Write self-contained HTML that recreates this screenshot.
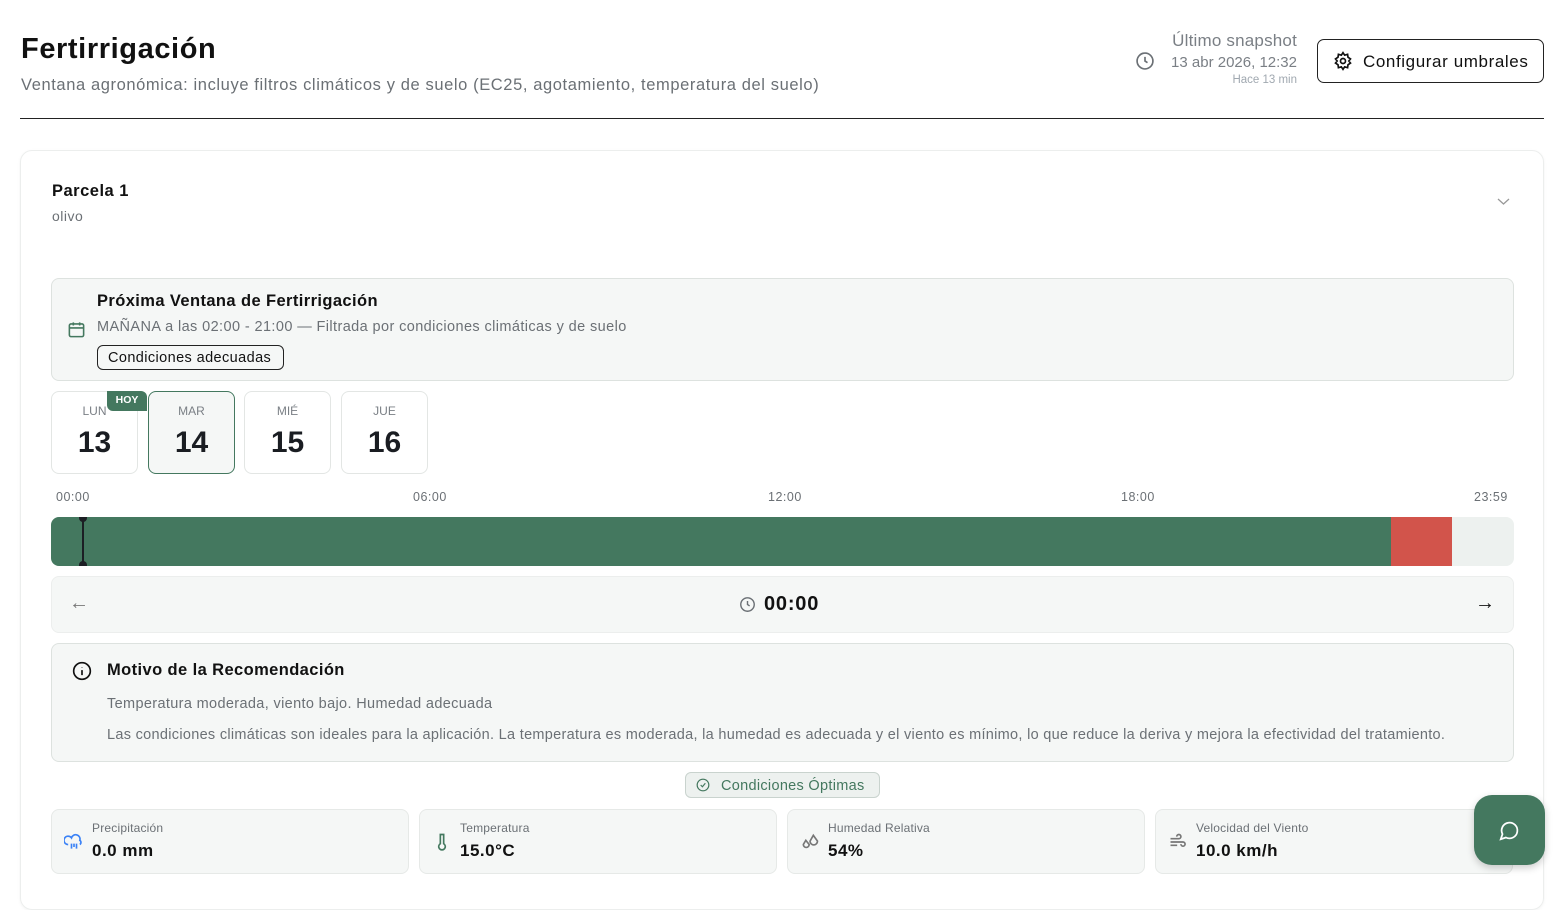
<!DOCTYPE html>
<html><head><meta charset="utf-8"><style>
*{box-sizing:border-box;margin:0;padding:0}
body{width:1564px;height:889px;overflow:hidden;background:#fff;font-family:"Liberation Sans",sans-serif;color:#111;position:relative;letter-spacing:.5px}
.abs{position:absolute}
.muted{color:#6b7075}
.box{position:absolute;background:#f5f7f6;border:1px solid #dde2df;border-radius:8px}
.day{position:absolute;top:391px;width:87px;height:83px;border:1px solid #e3e6e4;border-radius:8px;background:#fff;text-align:center;letter-spacing:0}
.day .d{font-size:12px;color:#7a7f85;margin-top:12px}
.day .n{font-size:30px;font-weight:bold;margin-top:8px;color:#1a1d22}
.stat{position:absolute;top:809px;height:65px;width:358px;background:#f5f7f6;border:1px solid #e6e9e7;border-radius:8px}
.stat .l{position:absolute;left:40px;top:11px;font-size:12px;color:#6b7075;letter-spacing:.2px}
.stat .v{position:absolute;left:40px;top:31px;font-size:17px;font-weight:bold}
.stat svg{position:absolute;left:12px;top:22px}
</style></head><body>
<div class="abs" style="left:21px;top:33px;font-size:29px;font-weight:bold;letter-spacing:.6px">Fertirrigación</div>
<div class="abs muted" style="left:21px;top:76px;font-size:16.5px;letter-spacing:.6px">Ventana agronómica: incluye filtros climáticos y de suelo (EC25, agotamiento, temperatura del suelo)</div>
<svg class="abs" style="left:1135px;top:51px" width="20" height="20" viewBox="0 0 24 24" fill="none" stroke="#6b7075" stroke-width="2"><circle cx="12" cy="12" r="9.5"/><path d="M12 7v5l3 2"/></svg>
<div class="abs" style="right:267px;top:31px;text-align:right;color:#7a7f85;letter-spacing:.2px">
<div style="font-size:17px">Último snapshot</div>
<div style="font-size:15px;margin-top:3px;letter-spacing:0">13 abr 2026, 12:32</div>
<div style="font-size:11.5px;margin-top:3px;color:#a0a8b0;letter-spacing:0">Hace 13 min</div></div>
<div class="abs" style="left:1317px;top:39px;width:227px;height:44px;border:1px solid #222;border-radius:7px;font-size:17px;padding:12px 0 0 45px;letter-spacing:.6px">Configurar umbrales</div>
<svg class="abs" style="left:1333px;top:51px" width="20" height="20" viewBox="0 0 24 24" fill="none" stroke="#111" stroke-width="2"><circle cx="12" cy="12" r="3"/><path d="M12 2l2 3 3.5-1 .5 3.5 3 2-2 2.5 2 2.5-3 2-.5 3.5-3.5-1-2 3-2-3-3.5 1-.5-3.5-3-2 2-2.5-2-2.5 3-2 .5-3.5 3.5 1z"/></svg>
<div class="abs" style="left:20px;top:118px;width:1524px;height:1px;background:#222"></div>
<div class="abs" style="left:20px;top:150px;width:1524px;height:760px;border:1px solid #eceeed;border-radius:12px;box-shadow:0 1px 3px rgba(0,0,0,.05)"></div>
<div class="abs" style="left:52px;top:182px;font-size:16.5px;font-weight:bold">Parcela 1</div>
<div class="abs muted" style="left:52px;top:208px;font-size:14px">olivo</div>
<svg class="abs" style="left:1497px;top:196px" width="13" height="10" viewBox="0 0 13 10" fill="none" stroke="#999" stroke-width="1.3"><path d="M1 3l5.5 5L12 3"/></svg>
<div class="box" style="left:51px;top:278px;width:1463px;height:103px"></div>
<div class="abs" style="left:97px;top:292px;font-size:16.5px;font-weight:bold;letter-spacing:.4px">Próxima Ventana de Fertirrigación</div>
<svg class="abs" style="left:67px;top:320px" width="19" height="19" viewBox="0 0 24 24" fill="none" stroke="#44785f" stroke-width="2"><rect x="3" y="5" width="18" height="16" rx="2"/><path d="M3 10h18M8 3v4M16 3v4"/></svg>
<div class="abs muted" style="left:97px;top:319px;font-size:14.5px;letter-spacing:.4px">MAÑANA a las 02:00 - 21:00 — Filtrada por condiciones climáticas y de suelo</div>
<div class="abs" style="left:97px;top:345px;height:25px;width:187px;border:1px solid #222;border-radius:6px;font-size:14.5px;padding:4px 0 0 10px;letter-spacing:.4px">Condiciones adecuadas</div>
<div class="day" style="left:51px"><div class="d">LUN</div><div class="n">13</div></div>
<div class="abs" style="left:107px;top:391px;width:40px;height:20px;background:#44785f;color:#fff;font-size:10.5px;font-weight:bold;text-align:center;padding-top:3px;border-radius:0 6px 0 6px;letter-spacing:0">HOY</div>
<div class="day" style="left:148px;background:#f5f7f6;border-color:#44785f"><div class="d">MAR</div><div class="n">14</div></div>
<div class="day" style="left:244px"><div class="d">MIÉ</div><div class="n">15</div></div>
<div class="day" style="left:341px"><div class="d">JUE</div><div class="n">16</div></div>
<div class="abs muted" style="left:56px;top:490px;font-size:12.5px">00:00</div>
<div class="abs muted" style="left:413px;top:490px;font-size:12.5px">06:00</div>
<div class="abs muted" style="left:768px;top:490px;font-size:12.5px">12:00</div>
<div class="abs muted" style="left:1121px;top:490px;font-size:12.5px">18:00</div>
<div class="abs muted" style="left:1474px;top:490px;font-size:12.5px">23:59</div>
<div class="abs" style="left:51px;top:517px;width:1463px;height:49px;border-radius:8px;overflow:hidden;background:#edf1ef">
<div class="abs" style="left:0;top:0;width:1340px;height:49px;background:#44785f"></div>
<div class="abs" style="left:1340px;top:0;width:61px;height:49px;background:#d2544b"></div>
<div class="abs" style="left:31px;top:2px;width:2px;height:45px;background:#1c1f24"></div>
<div class="abs" style="left:28px;top:0;width:8px;height:5px;border-radius:0 0 4px 4px;background:#1c1f24"></div>
<div class="abs" style="left:28px;top:44px;width:8px;height:5px;border-radius:4px 4px 0 0;background:#1c1f24"></div>
</div>
<div class="box" style="left:51px;top:576px;width:1463px;height:57px;border-color:#eceeed"></div>
<div class="abs" style="left:69px;top:592px;font-size:20px;color:#777">←</div>
<div class="abs" style="left:1475px;top:592px;font-size:20px">→</div>
<svg class="abs" style="left:739px;top:596px" width="17" height="17" viewBox="0 0 24 24" fill="none" stroke="#6b7075" stroke-width="2"><circle cx="12" cy="12" r="9.5"/><path d="M12 7v5l3 2"/></svg>
<div class="abs" style="left:764px;top:593px;font-size:20px;font-weight:bold;letter-spacing:.8px">00:00</div>
<div class="box" style="left:51px;top:643px;width:1463px;height:119px"></div>
<svg class="abs" style="left:72px;top:661px" width="20" height="20" viewBox="0 0 24 24" fill="none" stroke="#111" stroke-width="2"><circle cx="12" cy="12" r="10"/><path d="M12 11v6M12 7.5v.5"/></svg>
<div class="abs" style="left:107px;top:661px;font-size:16.5px;font-weight:bold;letter-spacing:.4px">Motivo de la Recomendación</div>
<div class="abs muted" style="left:107px;top:696px;font-size:14.5px;letter-spacing:.35px">Temperatura moderada, viento bajo. Humedad adecuada</div>
<div class="abs muted" style="left:107px;top:727px;font-size:14.5px;letter-spacing:.3px">Las condiciones climáticas son ideales para la aplicación. La temperatura es moderada, la humedad es adecuada y el viento es mínimo, lo que reduce la deriva y mejora la efectividad del tratamiento.</div>
<div class="abs" style="left:685px;top:772px;width:195px;height:26px;background:#edf1ef;border:1px solid #c9d3ce;border-radius:6px;color:#44785f;font-size:14.5px;padding:5px 0 0 35px;letter-spacing:.3px">Condiciones Óptimas</div>
<svg class="abs" style="left:696px;top:778px" width="14" height="14" viewBox="0 0 24 24" fill="none" stroke="#44785f" stroke-width="2"><circle cx="12" cy="12" r="10"/><path d="M8 12l3 3 5-6"/></svg>
<div class="stat" style="left:51px"><svg width="20" height="20" viewBox="0 0 24 24" fill="none" stroke="#3b82f6" stroke-width="2"><path d="M5 15a5 5 0 1 1 4-8 5 5 0 0 1 10 3 3 3 0 0 1 0 5M9 14v6M12 14v4M15 14v6"/></svg><div class="l">Precipitación</div><div class="v">0.0 mm</div></div>
<div class="stat" style="left:419px"><svg width="20" height="20" viewBox="0 0 24 24" fill="none" stroke="#44785f" stroke-width="2"><path d="M10 3h4v11a4 4 0 1 1-4 0z"/></svg><div class="l">Temperatura</div><div class="v">15.0°C</div></div>
<div class="stat" style="left:787px"><svg width="20" height="20" viewBox="0 0 24 24" fill="none" stroke="#777" stroke-width="2"><path d="M7 10l-3 5a3.5 3.5 0 0 0 7 0zM16 4l-4 7a4.5 4.5 0 0 0 9 0z"/></svg><div class="l">Humedad Relativa</div><div class="v">54%</div></div>
<div class="stat" style="left:1155px"><svg width="20" height="20" viewBox="0 0 24 24" fill="none" stroke="#777" stroke-width="2"><path d="M3 8h10a2.5 2.5 0 1 0-2.5-2.5M3 12h15a2.5 2.5 0 1 1-2.5 2.5M3 16h8"/></svg><div class="l">Velocidad del Viento</div><div class="v">10.0 km/h</div></div>
<div class="abs" style="left:1474px;top:795px;width:71px;height:70px;background:#44785f;border-radius:18px;box-shadow:0 3px 8px rgba(0,0,0,.2)"></div>
<svg class="abs" style="left:1499px;top:820px" width="21" height="21" viewBox="0 0 24 24" fill="none" stroke="#fff" stroke-width="2"><path d="M7.9 20A9 9 0 1 0 4 16.1L2 22z"/></svg>
</body></html>
